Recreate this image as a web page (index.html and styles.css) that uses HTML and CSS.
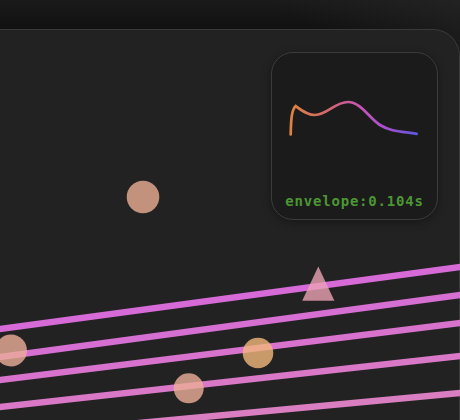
FILE: index.html
```html
<!DOCTYPE html>
<html>
<head>
<meta charset="utf-8">
<link rel="stylesheet" href="styles.css">
</head>
<body>
<div class="card">
  <div class="panel">
    <svg class="env" width="164" height="138" viewBox="1 1 164 138">
      <defs>
        <linearGradient id="eg" x1="19" y1="0" x2="146" y2="0" gradientUnits="userSpaceOnUse">
          <stop offset="0" stop-color="#de8240"/>
          <stop offset="0.3" stop-color="#d4666e"/>
          <stop offset="0.55" stop-color="#c855b4"/>
          <stop offset="0.78" stop-color="#a050d0"/>
          <stop offset="1" stop-color="#5a58dc"/>
        </linearGradient>
      </defs>
      <path d="M19.7 82.5 C20 68, 20.5 58, 24.7 54 C30 58, 36 63, 44 63 C56 63, 64 50, 77 50 C90 50, 98 66, 109 73 C120 80, 132 79.5, 145.7 81.8" fill="none" stroke="url(#eg)" stroke-width="2.7" stroke-linecap="round"/>
    </svg>
    <div class="label">envelope:0.104s</div>
  </div>
</div>
<svg class="canvas" width="460" height="420" viewBox="0 0 460 420">
  <g stroke-width="6.5" stroke-linecap="butt">
    <line x1="-2" y1="329.3" x2="462" y2="266.7" stroke="#d66bd8"/>
    <line x1="-2" y1="357.3" x2="462" y2="294.7" stroke="#d66fd2"/>
    <line x1="-2" y1="380.2" x2="462" y2="322.8" stroke="#d773cc"/>
    <line x1="-2" y1="407.2" x2="462" y2="355.8" stroke="#d878c6"/>
    <line x1="-2" y1="436.2" x2="462" y2="392.8" stroke="#d97ec0"/>
  </g>
  <g opacity="0.8">
    <circle cx="143" cy="197" r="16.3" fill="#ecae94"/>
    <circle cx="11" cy="350.5" r="16" fill="#ecae98"/>
    <circle cx="188.7" cy="388.3" r="15" fill="#ecae98"/>
    <circle cx="258" cy="353" r="15.3" fill="#f2b87c"/>
    <polygon points="318.3,266.5 302.2,300.8 334.4,300.8" fill="#eaa2b4"/>
  </g>
</svg>
</body>
</html>
```
FILE: styles.css
```css
html, body {
  margin: 0;
  padding: 0;
  width: 460px;
  height: 420px;
  overflow: hidden;
}
body {
  position: relative;
  background:
    linear-gradient(215deg, rgba(40,40,40,0.6) 0%, rgba(20,20,20,0) 18%),
    linear-gradient(180deg, #1a1a1a 0px, #121212 26px, #141414 100%);
}
.card {
  box-sizing: border-box;
  width: 500px;
  height: 391px;
  margin: 29px 0 0 -40px;
  padding-top: 22px;
  background: #222222;
  border: 1px solid #393939;
  border-bottom: 0;
  border-radius: 0 27px 0 0;
  display: flex;
  flex-direction: column;
  align-items: flex-end;
}
.panel {
  position: relative;
  z-index: 1;
  box-sizing: border-box;
  width: 167px;
  height: 168px;
  margin-right: 21px;
  background: #1b1b1b;
  border: 1px solid #3c3c3c;
  border-radius: 22px;
  box-shadow: 0 2px 8px rgba(0,0,0,0.35);
  display: flex;
  flex-direction: column;
}
.env {
  display: block;
}
.label {
  font-family: "DejaVu Sans Mono", "Liberation Mono", monospace;
  font-size: 14px;
  font-weight: bold;
  line-height: 20px;
  letter-spacing: 0.8px;
  color: #4c9634;
  text-align: center;
  white-space: nowrap;
}
.canvas {
  position: absolute;
  left: 0;
  top: 0;
}
```
